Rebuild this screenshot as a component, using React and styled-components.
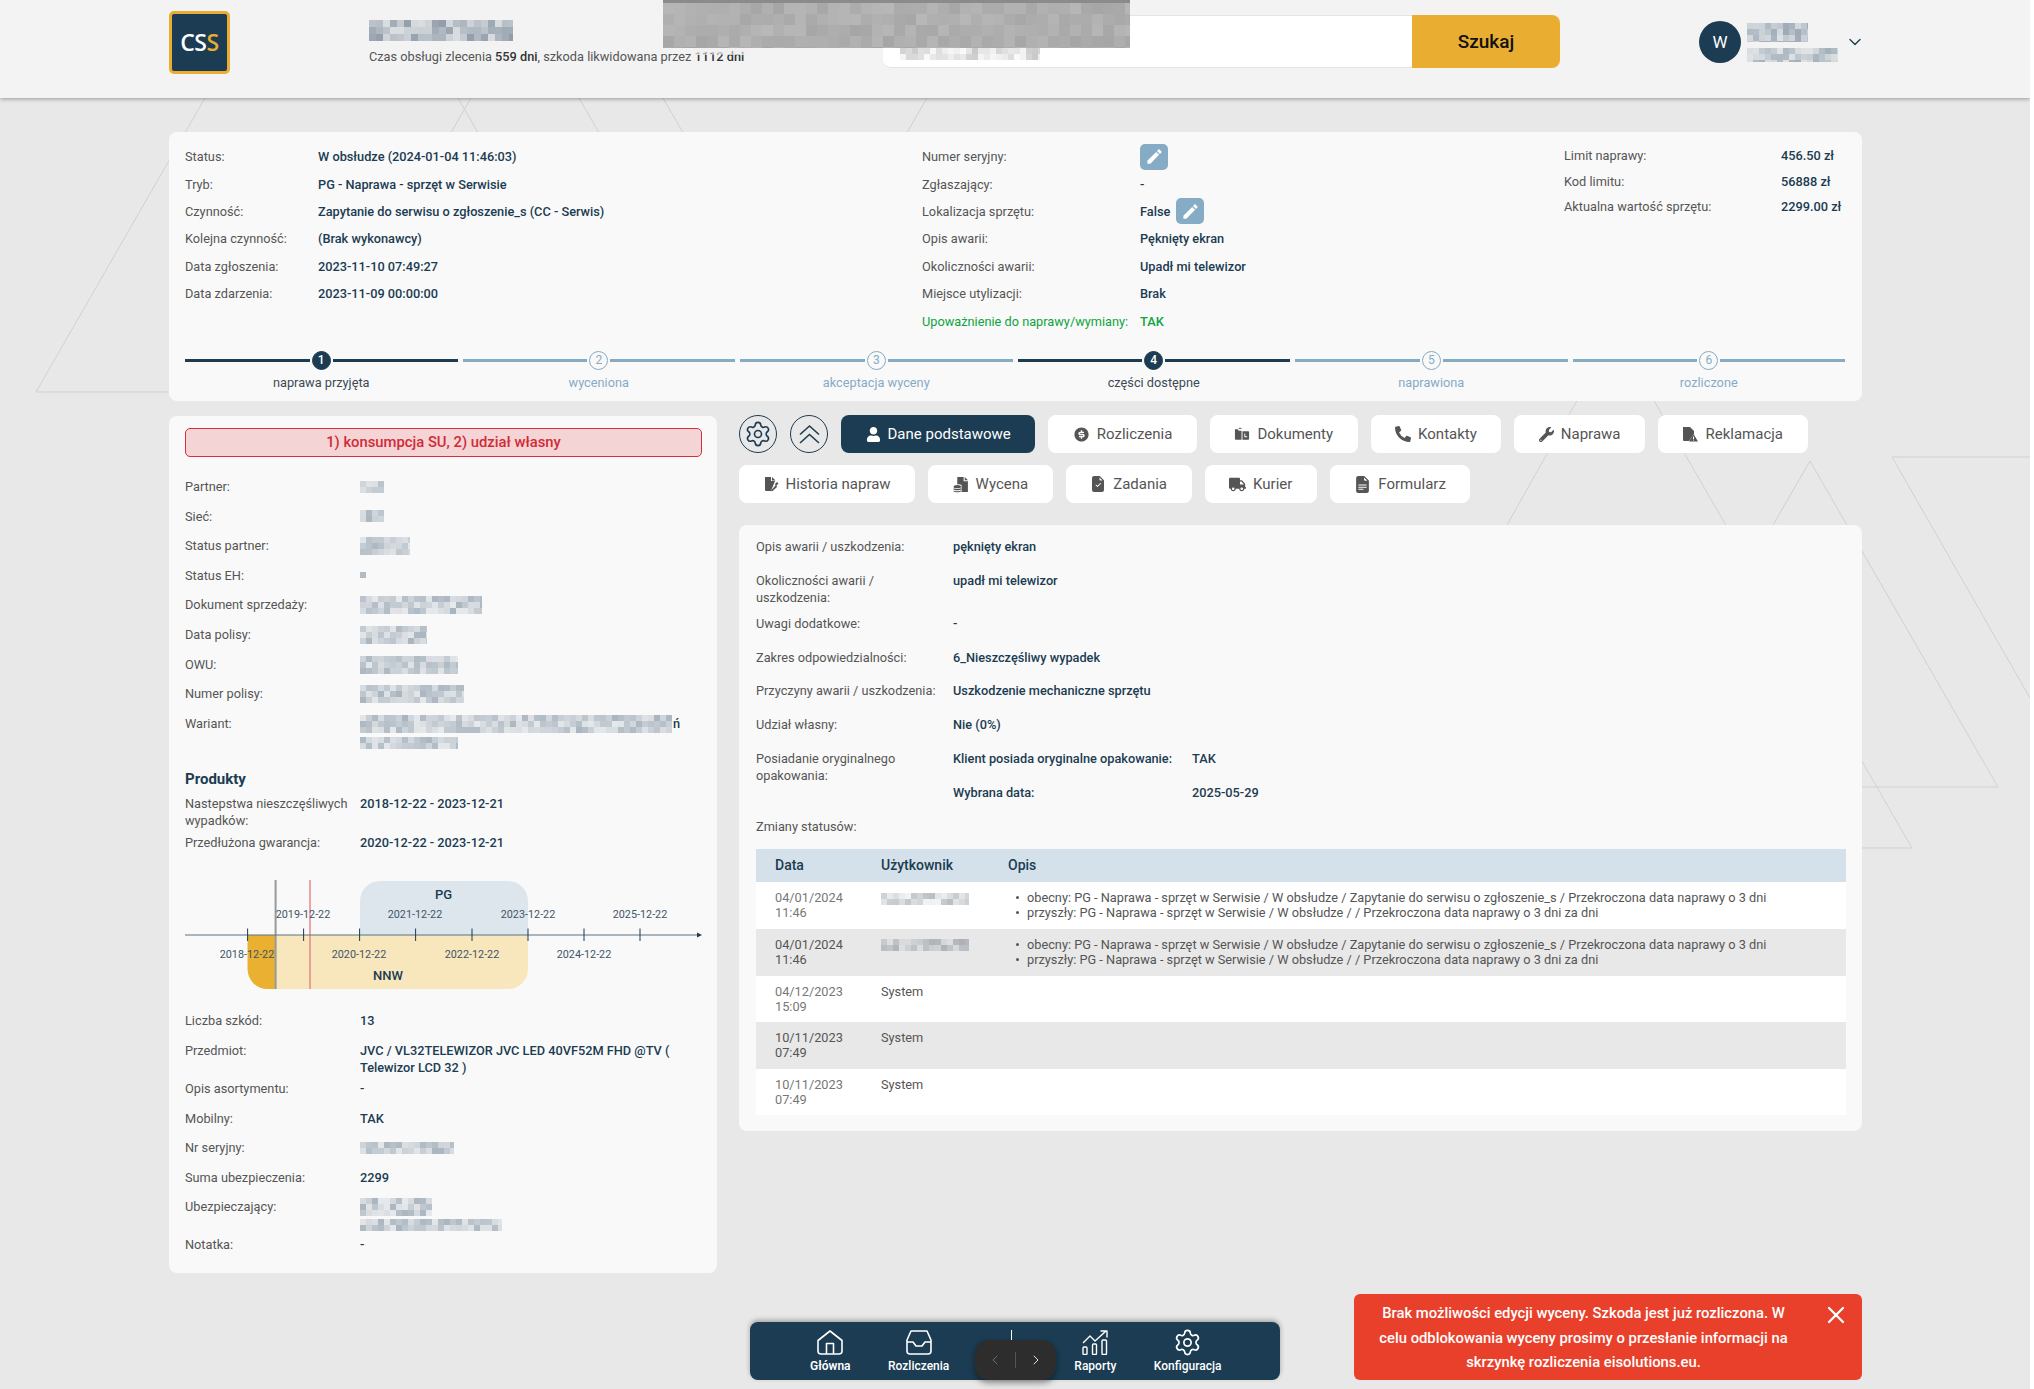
import React from 'react';
import styled, { createGlobalStyle } from 'styled-components';
import { Settings, ChevronDown, ChevronLeft, ChevronRight, X } from 'lucide-react';
import { FaUser, FaPhoneAlt, FaWrench, FaTruck } from 'react-icons/fa';
import { RiMoneyDollarCircleFill } from 'react-icons/ri';
import { BsFileEarmarkCheckFill, BsFileEarmarkTextFill } from 'react-icons/bs';
import { MdEdit } from 'react-icons/md';

const navy = '#1b3c52';
const steel = '#86abc5';

const Global = createGlobalStyle`
  html, body { margin: 0; padding: 0; background: #fff; }
  * { box-sizing: border-box; }
  body { font-family: Roboto, "Liberation Sans", sans-serif; font-size: 12.75px; line-height: 17px; color: #555; }
`;

const Page = styled.div`
  position: relative;
  width: 2030px;
  height: 1389px;
  background: #e8e8e8;
  overflow: hidden;
`;

const Backdrop = styled.svg`
  position: absolute;
  top: 0;
  left: 0;
`;

const Header = styled.header`
  position: relative;
  z-index: 2;
  display: flex;
  align-items: flex-start;
  height: 98px;
  padding: 11px 0 0 169px;
  background: #f3f3f3;
  box-shadow: 0 1px 4px rgba(0, 0, 0, 0.35);
`;

const Logo = styled.div`
  display: flex;
  align-items: center;
  justify-content: center;
  width: 61px;
  height: 63px;
  background: ${navy};
  border: 3px solid #e9ae31;
  border-radius: 5px;
  color: #fff;
  font-family: "Open Sans", sans-serif;
  font-size: 23px;
  font-weight: 600;
  letter-spacing: -0.5px;
  span { color: #e9ae31; }
`;

const CaseInfo = styled.div`
  width: 514px;
  margin-left: 139px;
  padding-top: 9px;
  p { margin: 6px 0 0; color: #555; line-height: 19px; }
  b { font-weight: 500; color: #333; }
`;

const Search = styled.div`
  display: flex;
  margin-top: 4px;
`;

const SearchInput = styled.input`
  width: 529px;
  height: 53px;
  background: #fff;
  border: 0;
  border-top: 1px solid #e4e4e4;
  border-bottom: 1px solid #e4e4e4;
  border-radius: 8px 0 0 8px;
`;

const SearchButton = styled.button`
  width: 148px;
  height: 53px;
  background: #e9ae31;
  border: 0;
  border-radius: 0 8px 8px 0;
  color: #111;
  font-family: Roboto, sans-serif;
  font-size: 19px;
  font-weight: 500;
`;

const User = styled.div`
  display: flex;
  align-items: center;
  margin: 10px 0 0 139px;
`;

const Avatar = styled.div`
  display: flex;
  align-items: center;
  justify-content: center;
  width: 42px;
  height: 42px;
  border-radius: 50%;
  background: ${navy};
  color: #fff;
  font-size: 17px;
  font-weight: 400;
`;

const UserText = styled.div`
  display: flex;
  flex-direction: column;
  gap: 6px;
  width: 98px;
  margin-left: 6px;
`;

const Censor = styled.div`
  position: absolute;
  top: 0;
  left: 663px;
  width: 467px;
  height: 48px;
  background: #a6a6a6;
  border-top: 3px solid #8b8b8b;
  svg { position: absolute; left: 0; top: 0; }
`;

const CensorTail = styled.div`
  position: absolute;
  top: 48px;
  left: ${p => p.$left}px;
`;

const Main = styled.main`
  position: relative;
  width: 1693px;
  margin: 34px 0 0 169px;
`;

const Card = styled.section`
  background: #f9f9f9;
  border-radius: 8px;
`;

const Summary = styled(Card)`
  height: 269px;
  padding: 11px 17px 0 16px;
`;

const SummaryGrid = styled.div`
  display: grid;
  grid-template-columns: 737px 642px 1fr;
  height: 208px;
`;

const InfoRow = styled.div`
  display: flex;
  align-items: center;
  height: ${p => p.$h || 27.4}px;
  color: ${p => p.$green ? '#0fa33d' : '#555'};
`;

const InfoLabel = styled.span`
  flex: 0 0 ${p => p.$w}px;
`;

const InfoValue = styled.span`
  display: flex;
  align-items: center;
  gap: 6px;
  font-weight: 500;
  color: ${p => p.$green ? '#0fa33d' : navy};
`;

const EditButton = styled.button`
  display: flex;
  align-items: center;
  justify-content: center;
  width: 28px;
  height: 26px;
  padding: 0;
  border: 0;
  border-radius: 5px;
  background: ${steel};
  color: #fff;
`;

const Stepper = styled.div`
  display: flex;
  gap: 5px;
`;

const Step = styled.div`
  flex: 1;
  display: flex;
  flex-direction: column;
  align-items: center;
  color: ${p => p.$on ? '#3c4a55' : steel};
`;

const StepTrack = styled.div`
  display: flex;
  align-items: center;
  gap: 2px;
  width: 100%;
  &::before, &::after {
    content: "";
    flex: 1;
    height: 3px;
    background: ${p => p.$on ? navy : steel};
  }
`;

const StepDot = styled.div`
  display: flex;
  align-items: center;
  justify-content: center;
  width: 19px;
  height: 19px;
  border-radius: 50%;
  font-size: 12px;
  font-weight: ${p => p.$on ? 500 : 400};
  color: ${p => p.$on ? '#fff' : steel};
  background: ${p => p.$on ? navy : 'transparent'};
  border: 1px solid ${p => p.$on ? navy : steel};
`;

const StepLabel = styled.div`
  margin-top: 4px;
`;

const Columns = styled.div`
  display: grid;
  grid-template-columns: 548px 1123px;
  gap: 22px;
  margin-top: 15px;
`;

const SidePanel = styled(Card)`
  height: 857px;
  padding: 12px 15px 0 16px;
`;

const WarningBox = styled.div`
  height: 29px;
  margin-bottom: 21px;
  background: #f4d4d5;
  border: 1px solid #d3323c;
  border-radius: 5px;
  color: #d02b37;
  font-size: 14.8px;
  font-weight: 500;
  line-height: 27px;
  text-align: center;
`;

const Field = styled.div`
  display: flex;
  align-items: flex-start;
  min-height: 29.6px;
  padding-bottom: 4.4px;
`;

const FieldLabel = styled.div`
  flex: 0 0 175px;
  padding-right: 5px;
  color: #555;
`;

const FieldValue = styled.div`
  flex: 1;
  font-weight: 500;
  color: ${navy};
`;

const Stack = styled.div`
  display: flex;
  flex-direction: column;
  gap: ${p => p.$gap || 0}px;
`;

const MosaicLine = styled.div`
  display: flex;
  align-items: center;
  gap: 1px;
  min-height: 17px;
`;

const SectionTitle = styled.h3`
  margin: 16px 0 6px;
  font-size: 15px;
  line-height: 20px;
  font-weight: 700;
  color: ${navy};
`;

const Chart = styled.svg`
  display: block;
  margin: 17px 0 22px;
  overflow: visible;
  font-family: Roboto, sans-serif;
`;

const RightColumn = styled.div`
  margin-top: -1px;
`;

const Tabs = styled.nav`
  display: flex;
  flex-wrap: wrap;
  gap: 12px 13px;
  margin-bottom: 22px;
`;

const RoundButton = styled.button`
  display: flex;
  align-items: center;
  justify-content: center;
  width: 38px;
  height: 38px;
  padding: 0;
  background: transparent;
  border: 1px solid ${navy};
  border-radius: 50%;
  color: ${navy};
`;

const Tab = styled.button`
  display: flex;
  align-items: center;
  gap: 7px;
  height: 38px;
  padding: 0 24.5px;
  border: 0;
  border-radius: 8px;
  background: ${p => p.$active ? navy : '#fff'};
  color: ${p => p.$active ? '#fff' : '#555'};
  font-family: Roboto, sans-serif;
  font-size: 15px;
`;

const DetailCard = styled(Card)`
  height: 606px;
  padding: 13px 16px 0 17px;
`;

const DetailRow = styled.div`
  display: flex;
  align-items: flex-start;
  min-height: 33.8px;
  padding-bottom: ${p => p.$flush ? 0 : 9}px;
`;

const DetailLabel = styled.div`
  flex: 0 0 197px;
  padding-right: 12px;
`;

const SubLabel = styled.span`
  display: inline-block;
  width: 239px;
`;

const SubRow = styled.div`
  height: 33.8px;
  font-weight: 500;
  color: ${navy};
`;

const Table = styled.div`
  margin-top: -2px;
`;

const TableHead = styled.div`
  display: grid;
  grid-template-columns: 106px 127px 1fr;
  align-items: center;
  height: 33px;
  padding-left: 19px;
  background: #d5e1ea;
  color: ${navy};
  font-size: 14px;
  font-weight: 500;
`;

const TableRow = styled.div`
  display: grid;
  grid-template-columns: 106px 127px 1fr;
  height: 46.6px;
  padding: 8px 0 0 19px;
  background: ${p => p.$odd ? '#e8e8e8' : '#fff'};
  line-height: 15px;
`;

const DateCell = styled.div`
  color: ${p => p.$odd ? '#555' : '#777'};
`;

const StatusList = styled.ul`
  margin: 0;
  padding: 0 0 0 8px;
  list-style: none;
`;

const StatusItem = styled.li`
  display: flex;
  align-items: center;
  gap: 8px;
  &::before {
    content: "";
    width: 3px;
    height: 3px;
    border-radius: 50%;
    background: #555;
  }
`;

const Footer = styled.footer`
  position: relative;
  display: flex;
  align-items: flex-end;
  gap: 74px;
  width: 1693px;
  margin: 21px 0 0 169px;
  padding-left: 581px;
`;

const Dock = styled.nav`
  position: relative;
  display: flex;
  gap: 37.5px;
  width: 530px;
  height: 58px;
  padding: 8px 0 0 60px;
  background: ${navy};
  border-radius: 8px;
  box-shadow: 0 -2px 5px rgba(0, 0, 0, 0.3);
`;

const DockItem = styled.div`
  display: flex;
  flex-direction: column;
  align-items: center;
  min-width: ${p => p.$min || 0}px;
  color: #fff;
  font-size: 12px;
  line-height: 14px;
  font-weight: ${p => p.$bold ? 600 : 500};
  svg { display: block; margin-bottom: 4px; }
`;

const DockGear = styled(Settings)`
  margin: -2px 0 2px !important;
`;

const Stick = styled.div`
  width: 1px;
  height: 12px;
  background: #fff;
`;

const Pager = styled.div`
  position: absolute;
  top: 18px;
  left: 225px;
  display: flex;
  align-items: center;
  width: 81px;
  height: 40px;
  background: #2d2d2d;
  border-radius: 14px;
  box-shadow: 0 3px 6px rgba(0, 0, 0, 0.4);
`;

const PagerButton = styled.div`
  flex: 1;
  display: flex;
  justify-content: center;
  color: ${p => p.$dim ? '#777' : '#fff'};
  & + & { border-left: 1px solid #555; }
`;

const Toast = styled.div`
  position: relative;
  width: 508px;
  height: 86px;
  padding: 7px 71px 0 22px;
  background: #e9402b;
  border-radius: 6px;
  color: #fff;
  font-size: 14.8px;
  font-weight: 500;
  line-height: 24.5px;
  text-align: center;
`;

const ToastClose = styled.button`
  position: absolute;
  top: 7px;
  right: 12px;
  padding: 0;
  background: none;
  border: 0;
  color: #fff;
`;

const MosaicFrame = styled.svg`
  display: block;
  flex-shrink: 0;
`;

// kept as a plain picture: the reference has these values pixelated out
const Mosaic = ({ w, h, seed = 1, cell = 6, tone = '126,144,160', strength = 0.5, floor = 0.15 }) => {
  let s = seed * 9301 + 49297;
  const next = () => {
    s = (s * 9301 + 49297) % 233280;
    return s / 233280;
  };
  const cells = [];
  for (let y = 0; y < h; y += cell) {
    for (let x = 0; x < w; x += cell) {
      cells.push(
        <rect key={x + '-' + y} x={x} y={y} width={cell} height={cell} fill={`rgb(${tone})`} opacity={floor + next() * strength} />
      );
    }
  }
  return (
    <MosaicFrame width={w} height={h} shapeRendering="crispEdges" aria-hidden="true">
      {cells}
    </MosaicFrame>
  );
};

const ChevronsIcon = () => (
  <svg width="23" height="21" viewBox="0 0 23 21" fill="none" stroke="currentColor" strokeWidth="1.6">
    <path d="M2 10.5L11.5 2l9.5 8.5M2 19l9.5-8.5L21 19" />
  </svg>
);

const DocumentsIcon = () => (
  <svg width="16" height="16" viewBox="0 0 17 16" fill="currentColor">
    <path d="M1 3h3l1 1.5h3V14H2a1 1 0 0 1-1-1z" />
    <path d="M5 1.5h3v1H5z" />
    <path d="M9 5h6a1 1 0 0 1 1 1v7a1 1 0 0 1-1 1H9zm2 2.5v4h3v-1h-2v-3z" fillRule="evenodd" />
  </svg>
);

const ClaimIcon = () => (
  <svg width="16" height="16" viewBox="0 0 16 16" fill="currentColor">
    <path d="M1 1h7l4 4v2.5L7 15H2a1 1 0 0 1-1-1z" />
    <path d="M11.5 8l4.5 7.5H7zM11 10.5v2.5h1v-2.5zM11 13.6v1h1v-1z" fillRule="evenodd" />
  </svg>
);

const HistoryIcon = () => (
  <svg width="15" height="16" viewBox="0 0 15 16" fill="currentColor">
    <path d="M1 1h6v4h4L7 15H2a1 1 0 0 1-1-1z" />
    <path d="M8 1l3.5 3.5H8z" />
    <path d="M13 6l1.5 1.5-2 2 .5 1.5-5 4.5-1-1 4.5-5-.5-1.5z" />
  </svg>
);

const QuoteIcon = () => (
  <svg width="16" height="17" viewBox="0 0 15 16" fill="currentColor">
    <path d="M4 1h6v4h4v10H8V8.5C7 7.8 5 7.6 4 8z" />
    <path d="M11 1l3 3h-3z" />
    <ellipse cx="4" cy="10" rx="3.5" ry="1.6" />
    <path d="M.5 11.5c1 1 6 1 7 0v1.2c-1 1-6 1-7 0zM.5 13.6c1 1 6 1 7 0v.8c-1 1.2-6 1.2-7 0z" />
  </svg>
);

const HomeIcon = () => (
  <svg width="26" height="25" viewBox="0 0 26 25" fill="none" stroke="currentColor" strokeWidth="1.6" strokeLinejoin="round">
    <path d="M1 10.5L13 1l12 9.5V21a3 3 0 0 1-3 3H4a3 3 0 0 1-3-3z" />
    <path d="M9.5 24V13.5h7V24" />
  </svg>
);

const TrayIcon = () => (
  <svg width="26" height="25" viewBox="0 0 26 25" fill="none" stroke="currentColor" strokeWidth="1.6" strokeLinejoin="round">
    <path d="M5 1h16l4 9v11a3 3 0 0 1-3 3H4a3 3 0 0 1-3-3V10z" />
    <path d="M1 12h6l3 4h6l3-4h6" />
  </svg>
);

const ReportsIcon = () => (
  <svg width="26" height="25" viewBox="0 0 26 25" fill="none" stroke="currentColor" strokeWidth="1.4" strokeLinejoin="round">
    <rect x="1" y="17" width="4" height="7.5" rx="1" />
    <rect x="10.5" y="14" width="4" height="10.5" rx="1" />
    <rect x="20" y="10" width="4.5" height="14.5" rx="1" />
    <path d="M1 13l7-7 5 5L24 1M18.5 1H25v6.5" />
  </svg>
);

const summaryLeft = [
  ['Status:', 'W obsłudze (2024-01-04 11:46:03)'],
  ['Tryb:', 'PG - Naprawa - sprzęt w Serwisie'],
  ['Czynność:', 'Zapytanie do serwisu o zgłoszenie_s (CC - Serwis)'],
  ['Kolejna czynność:', '(Brak wykonawcy)'],
  ['Data zgłoszenia:', '2023-11-10 07:49:27'],
  ['Data zdarzenia:', '2023-11-09 00:00:00'],
];

const summaryRight = [
  ['Limit naprawy:', '456.50 zł'],
  ['Kod limitu:', '56888 zł'],
  ['Aktualna wartość sprzętu:', '2299.00 zł'],
];

const steps = [
  ['naprawa przyjęta', true],
  ['wyceniona', false],
  ['akceptacja wyceny', false],
  ['części dostępne', true],
  ['naprawiona', false],
  ['rozliczone', false],
];

const partnerFields = [
  ['Partner:', 24, 12, 2],
  ['Sieć:', 24, 12, 3],
  ['Status partner:', 50, 18, 4],
  ['Status EH:', 6, 6, 5],
  ['Dokument sprzedaży:', 122, 18, 6],
  ['Data polisy:', 67, 18, 7],
  ['OWU:', 98, 18, 8],
  ['Numer polisy:', 104, 18, 9],
];

const tabs = [
  ['Rozliczenia', <RiMoneyDollarCircleFill size={17} />],
  ['Dokumenty', <DocumentsIcon />],
  ['Kontakty', <FaPhoneAlt size={16} />],
  ['Naprawa', <FaWrench size={15} />],
  ['Reklamacja', <ClaimIcon />],
  ['Historia napraw', <HistoryIcon />],
  ['Wycena', <QuoteIcon />],
  ['Zadania', <BsFileEarmarkCheckFill size={16} />],
  ['Kurier', <FaTruck size={17} />],
  ['Formularz', <BsFileEarmarkTextFill size={17} />],
];

const currentLine = 'obecny: PG - Naprawa - sprzęt w Serwisie / W obsłudze / Zapytanie do serwisu o zgłoszenie_s / Przekroczona data naprawy o 3 dni';
const nextLine = 'przyszły: PG - Naprawa - sprzęt w Serwisie / W obsłudze / / Przekroczona data naprawy o 3 dni za dni';

const statusRows = [
  { date: '04/01/2024', time: '11:46', seed: 31, list: true },
  { date: '04/01/2024', time: '11:46', seed: 32, list: true },
  { date: '04/12/2023', time: '15:09', user: 'System' },
  { date: '10/11/2023', time: '07:49', user: 'System' },
  { date: '10/11/2023', time: '07:49', user: 'System' },
];

const ticks = [247.6, 303.6, 359.6, 415.6, 472, 528, 584, 640];
const below = [[247, '2018-12-22'], [359, '2020-12-22'], [472, '2022-12-22'], [584, '2024-12-22']];
const above = [[303, '2019-12-22'], [415, '2021-12-22'], [528, '2023-12-22'], [640, '2025-12-22']];

const Timeline = () => (
  <Chart width="517" height="110" viewBox="185 881 517 110">
    <path d="M360 936v-34a20 20 0 0 1 20-20h128a20 20 0 0 1 20 20v34z" fill="#dde6ed" />
    <path d="M247.6 936h280.4v34a20 20 0 0 1-20 20H267.6a20 20 0 0 1-20-20z" fill="#f8e6bd" />
    <path d="M247.6 936h28v54h-8a20 20 0 0 1-20-20z" fill="#e9b032" />
    <path d="M275.6 881v109" stroke="#999" strokeWidth="2" />
    <path d="M310 881v109" stroke="#e58a8a" strokeWidth="1.5" />
    <path d="M185 936h513" stroke="#5a7386" strokeWidth="1.2" />
    <path d="M697 933.5l5 2.5-5 2.5z" fill={navy} />
    {ticks.map(x => <path key={x} d={`M${x} 929.5v12.5`} stroke={navy} strokeWidth="1" />)}
    {above.map(([x, t]) => <text key={t} x={x} y="919" textAnchor="middle" fontSize="10.8" fill="#3f5566">{t}</text>)}
    {below.map(([x, t]) => <text key={t} x={x} y="959" textAnchor="middle" fontSize="10.8" fill="#3f5566">{t}</text>)}
    <text x="443.6" y="900" textAnchor="middle" fontSize="13" fontWeight="500" fill={navy}>PG</text>
    <text x="388" y="981" textAnchor="middle" fontSize="13" fontWeight="500" fill={navy}>NNW</text>
  </Chart>
);

const App = () => {
  return (
    <Page>
      <Global />
      <Backdrop width="2030" height="1389" fill="none" stroke="#cdd2d6" strokeWidth="1">
        <path d="M205 98L36 392H200" />
        <path d="M458 98l30 52M471 98l-30 52M579 98l30 52M663 98l30 52M927 98l-30 52" />
        <path d="M1507 525L1615 333L1912 848H1800" />
        <path d="M1773 525L1810 461L1998 787H1800" />
        <path d="M2030 457H1892L2030 698" />
      </Backdrop>

      <Header>
        <Logo>CS<span>S</span></Logo>
        <CaseInfo>
          <Mosaic w={144} h={21} cell={7} seed={20} tone="90,110,130" />
          <p>Czas obsługi zlecenia <b>559 dni</b>, szkoda likwidowana przez <b>1112 dni</b></p>
        </CaseInfo>
        <Search>
          <SearchInput readOnly aria-label="Szukaj" />
          <SearchButton>Szukaj</SearchButton>
        </Search>
        <User>
          <Avatar>W</Avatar>
          <UserText>
            <Mosaic w={61} h={19} cell={6} seed={21} tone="110,130,150" />
            <Mosaic w={91} h={14} cell={6} seed={22} tone="120,140,155" />
          </UserText>
          <ChevronDown size={20} color={navy} strokeWidth={1.6} />
        </User>
        <Censor>
          <Mosaic w={467} h={45} cell={11} seed={23} tone="205,205,205" strength={0.45} floor={0} />
        </Censor>
        <CensorTail $left={694}>
          <Mosaic w={54} h={7} cell={6} seed={25} tone="240,240,240" strength={0.5} floor={0.4} />
        </CensorTail>
        <CensorTail $left={900}>
          <Mosaic w={140} h={12} cell={6} seed={24} tone="170,170,170" strength={0.6} floor={0.05} />
        </CensorTail>
      </Header>

      <Main>
        <Summary>
          <SummaryGrid>
            <div>
              {summaryLeft.map(([label, value]) => (
                <InfoRow key={label}>
                  <InfoLabel $w={133}>{label}</InfoLabel>
                  <InfoValue>{value}</InfoValue>
                </InfoRow>
              ))}
            </div>
            <div>
              <InfoRow>
                <InfoLabel $w={218}>Numer seryjny:</InfoLabel>
                <EditButton><MdEdit size={19} /></EditButton>
              </InfoRow>
              <InfoRow>
                <InfoLabel $w={218}>Zgłaszający:</InfoLabel>
                <InfoValue>-</InfoValue>
              </InfoRow>
              <InfoRow>
                <InfoLabel $w={218}>Lokalizacja sprzętu:</InfoLabel>
                <InfoValue>False <EditButton><MdEdit size={19} /></EditButton></InfoValue>
              </InfoRow>
              <InfoRow>
                <InfoLabel $w={218}>Opis awarii:</InfoLabel>
                <InfoValue>Pęknięty ekran</InfoValue>
              </InfoRow>
              <InfoRow>
                <InfoLabel $w={218}>Okoliczności awarii:</InfoLabel>
                <InfoValue>Upadł mi telewizor</InfoValue>
              </InfoRow>
              <InfoRow>
                <InfoLabel $w={218}>Miejsce utylizacji:</InfoLabel>
                <InfoValue>Brak</InfoValue>
              </InfoRow>
              <InfoRow $green>
                <InfoLabel $w={218}>Upoważnienie do naprawy/wymiany:</InfoLabel>
                <InfoValue $green>TAK</InfoValue>
              </InfoRow>
            </div>
            <div>
              {summaryRight.map(([label, value]) => (
                <InfoRow key={label} $h={25.5}>
                  <InfoLabel $w={217}>{label}</InfoLabel>
                  <InfoValue>{value}</InfoValue>
                </InfoRow>
              ))}
            </div>
          </SummaryGrid>
          <Stepper>
            {steps.map(([label, on], i) => (
              <Step key={label} $on={on}>
                <StepTrack $on={on}>
                  <StepDot $on={on}>{i + 1}</StepDot>
                </StepTrack>
                <StepLabel>{label}</StepLabel>
              </Step>
            ))}
          </Stepper>
        </Summary>

        <Columns>
          <SidePanel>
            <WarningBox>1) konsumpcja SU, 2) udział własny</WarningBox>
            {partnerFields.map(([label, w, h, seed]) => (
              <Field key={label}>
                <FieldLabel>{label}</FieldLabel>
                <FieldValue><MosaicLine><Mosaic w={w} h={h} seed={seed} /></MosaicLine></FieldValue>
              </Field>
            ))}
            <Field>
              <FieldLabel>Wariant:</FieldLabel>
              <FieldValue>
                <Stack $gap={4}>
                  <MosaicLine><Mosaic w={312} h={18} seed={10} />ń</MosaicLine>
                  <Mosaic w={98} h={12} seed={11} />
                </Stack>
              </FieldValue>
            </Field>

            <SectionTitle>Produkty</SectionTitle>
            <Field>
              <FieldLabel>Nastepstwa nieszczęśliwych wypadków:</FieldLabel>
              <FieldValue>2018-12-22 - 2023-12-21</FieldValue>
            </Field>
            <Field>
              <FieldLabel>Przedłużona gwarancja:</FieldLabel>
              <FieldValue>2020-12-22 - 2023-12-21</FieldValue>
            </Field>

            <Timeline />

            <Field>
              <FieldLabel>Liczba szkód:</FieldLabel>
              <FieldValue>13</FieldValue>
            </Field>
            <Field>
              <FieldLabel>Przedmiot:</FieldLabel>
              <FieldValue>JVC / VL32TELEWIZOR JVC LED 40VF52M FHD @TV ( Telewizor LCD 32 )</FieldValue>
            </Field>
            <Field>
              <FieldLabel>Opis asortymentu:</FieldLabel>
              <FieldValue>-</FieldValue>
            </Field>
            <Field>
              <FieldLabel>Mobilny:</FieldLabel>
              <FieldValue>TAK</FieldValue>
            </Field>
            <Field>
              <FieldLabel>Nr seryjny:</FieldLabel>
              <FieldValue><MosaicLine><Mosaic w={94} h={12} seed={14} /></MosaicLine></FieldValue>
            </Field>
            <Field>
              <FieldLabel>Suma ubezpieczenia:</FieldLabel>
              <FieldValue>2299</FieldValue>
            </Field>
            <Field>
              <FieldLabel>Ubezpieczający:</FieldLabel>
              <FieldValue>
                <Stack $gap={3}>
                  <Mosaic w={72} h={18} seed={15} />
                  <Mosaic w={142} h={12} seed={16} />
                </Stack>
              </FieldValue>
            </Field>
            <Field>
              <FieldLabel>Notatka:</FieldLabel>
              <FieldValue>-</FieldValue>
            </Field>
          </SidePanel>

          <RightColumn>
            <Tabs>
              <RoundButton><Settings size={28} strokeWidth={1.4} /></RoundButton>
              <RoundButton><ChevronsIcon /></RoundButton>
              <Tab $active><FaUser size={15} /> Dane podstawowe</Tab>
              {tabs.map(([label, icon]) => (
                <Tab key={label}>{icon} {label}</Tab>
              ))}
            </Tabs>

            <DetailCard>
              <DetailRow>
                <DetailLabel>Opis awarii / uszkodzenia:</DetailLabel>
                <FieldValue>pęknięty ekran</FieldValue>
              </DetailRow>
              <DetailRow>
                <DetailLabel>Okoliczności awarii / uszkodzenia:</DetailLabel>
                <FieldValue>upadł mi telewizor</FieldValue>
              </DetailRow>
              <DetailRow>
                <DetailLabel>Uwagi dodatkowe:</DetailLabel>
                <FieldValue>-</FieldValue>
              </DetailRow>
              <DetailRow>
                <DetailLabel>Zakres odpowiedzialności:</DetailLabel>
                <FieldValue>6_Nieszczęśliwy wypadek</FieldValue>
              </DetailRow>
              <DetailRow>
                <DetailLabel>Przyczyny awarii / uszkodzenia:</DetailLabel>
                <FieldValue>Uszkodzenie mechaniczne sprzętu</FieldValue>
              </DetailRow>
              <DetailRow>
                <DetailLabel>Udział własny:</DetailLabel>
                <FieldValue>Nie (0%)</FieldValue>
              </DetailRow>
              <DetailRow $flush>
                <DetailLabel>Posiadanie oryginalnego opakowania:</DetailLabel>
                <Stack>
                  <SubRow><SubLabel>Klient posiada oryginalne opakowanie:</SubLabel>TAK</SubRow>
                  <SubRow><SubLabel>Wybrana data:</SubLabel>2025-05-29</SubRow>
                </Stack>
              </DetailRow>
              <DetailRow>
                <DetailLabel>Zmiany statusów:</DetailLabel>
              </DetailRow>
              <Table>
                <TableHead>
                  <span>Data</span>
                  <span>Użytkownik</span>
                  <span>Opis</span>
                </TableHead>
                {statusRows.map((row, i) => (
                  <TableRow key={i} $odd={i % 2 === 1}>
                    <DateCell $odd={i % 2 === 1}>{row.date}<br />{row.time}</DateCell>
                    <div>
                      {row.user || <MosaicLine><Mosaic w={88} h={12} seed={row.seed} tone="110,120,130" strength={0.4} floor={0.08} /></MosaicLine>}
                    </div>
                    {row.list ? (
                      <StatusList>
                        <StatusItem>{currentLine}</StatusItem>
                        <StatusItem>{nextLine}</StatusItem>
                      </StatusList>
                    ) : <div />}
                  </TableRow>
                ))}
              </Table>
            </DetailCard>
          </RightColumn>
        </Columns>
      </Main>

      <Footer>
        <Dock>
          <DockItem $bold><HomeIcon />Główna</DockItem>
          <DockItem><TrayIcon />Rozliczenia</DockItem>
          <DockItem $min={50}><Stick /></DockItem>
          <DockItem><ReportsIcon />Raporty</DockItem>
          <DockItem><DockGear size={29} strokeWidth={1.4} />Konfiguracja</DockItem>
          <Pager>
            <PagerButton $dim><ChevronLeft size={16} strokeWidth={1.3} /></PagerButton>
            <PagerButton><ChevronRight size={16} strokeWidth={1.3} /></PagerButton>
          </Pager>
        </Dock>
        <Toast>
          Brak możliwości edycji wyceny. Szkoda jest już rozliczona. W celu odblokowania wyceny prosimy o przesłanie informacji na skrzynkę rozliczenia eisolutions.eu.
          <ToastClose><X size={28} strokeWidth={2} /></ToastClose>
        </Toast>
      </Footer>
    </Page>
  );
};

export default App;
